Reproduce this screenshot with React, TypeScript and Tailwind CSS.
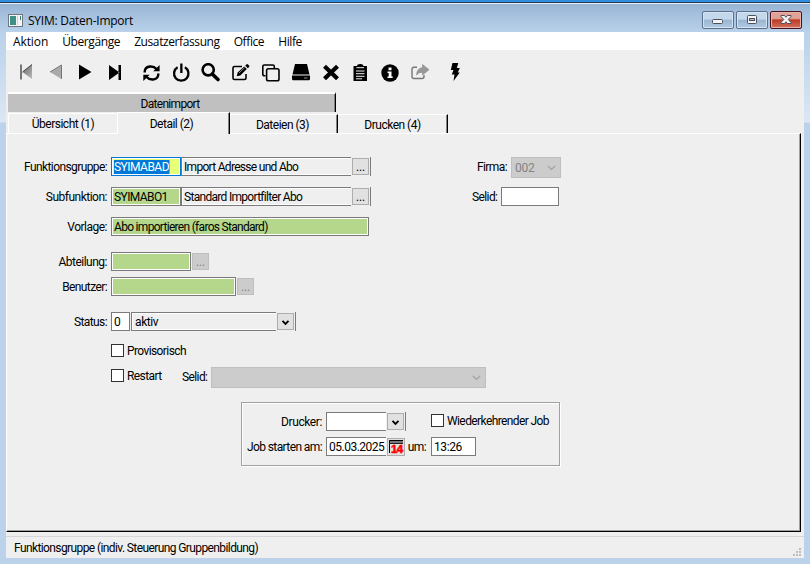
import type { ReactNode } from 'react';
import clsx from 'clsx';

const menuItems = ['Aktion', 'Übergänge', 'Zusatzerfassung', 'Office', 'Hilfe'];

const Icon = ({ children, className }: { children: ReactNode; className?: string }) => (
  <button className={clsx('flex h-5 w-[30px] shrink-0 items-center justify-center', className)}>
    <svg width="20" height="20" viewBox="0 0 20 20" fill="#000">
      {children}
    </svg>
  </button>
);

const Toolbar = () => (
  <div className="flex h-[42px] items-start pt-[13px] pl-[5px]">
    <Icon>
      <defs>
        <linearGradient id="fade" x1="0" y1="0" x2="1" y2="1">
          <stop offset="0" stopColor="#666" />
          <stop offset="1" stopColor="#bbb" />
        </linearGradient>
      </defs>
      <path d="M5 1.500v15" stroke="#777" strokeWidth="2" />
      <path d="M16 1.500v14.500L6.500 9z" fill="url(#fade)" />
      <path d="M16 1.500L6.500 9" stroke="#444" strokeWidth="1" />
    </Icon>
    <Icon>
      <path d="M15.500 2v14L4 9z" fill="#aaa" />
      <path d="M15.500 2v14M15.500 2L4 9" stroke="#777" fill="none" />
    </Icon>
    <Icon>
      <path d="M3 1.500v15L15.500 9z" />
    </Icon>
    <Icon>
      <path d="M3 2v15L13.500 9.500zM12.500 2H15v15h-2.500z" />
    </Icon>
    <Icon className="ml-1.5">
      <g fill="none" stroke="#000" strokeWidth="2.400">
        <path d="M2.700 9.500V8.500Q3 4 8 3.500q4-.3 6.500 2.500" />
        <path d="M16.300 10.500v1Q16 16 11 16.500q-4 .3-6.500-2.500" />
      </g>
      <path d="M17.600 2v6.200h-6.400zM1.300 18v-6.200h6.400z" />
    </Icon>
    <Icon>
      <path d="M5.600 4.300a7.200 7.200 0 1 0 7.300 0" fill="none" stroke="#000" strokeWidth="2.300" />
      <path d="M8.200.5h2.300V10H8.200z" />
    </Icon>
    <Icon className="-ml-px">
      <circle cx="7.200" cy="6.800" r="5.600" fill="none" stroke="#000" strokeWidth="2.600" />
      <path d="M11.500 11.200l5.500 5.300" stroke="#000" strokeWidth="3.600" strokeLinecap="round" />
    </Icon>
    <Icon>
      <path d="M11 3.500H3.500A1.500 1.500 0 0 0 2 5v10a1.500 1.500 0 0 0 1.500 1.500h10A1.500 1.500 0 0 0 15 15v-4" fill="none" stroke="#000" strokeWidth="1.600" />
      <path d="M5.800 13.300l.8-3.700 6.700-6.200 2.500 2.600-6.500 6.400zM14.200 2.600l1.200-1.200q.8-.6 1.600 0l1.100 1.100q.6.800 0 1.500l-1.300 1.200z" />
      <path d="M8 10l5.500-5.200" stroke="#efefef" strokeWidth=".6" />
    </Icon>
    <Icon>
      <g fill="none" stroke="#000" strokeWidth="1.600">
        <path d="M4.500 12.800H3.300a1.500 1.500 0 0 1-1.500-1.500V3.500A1.500 1.500 0 0 1 3.300 2h8.500a1.500 1.500 0 0 1 1.500 1.500V5" />
        <rect x="5.600" y="5.800" width="12.400" height="12" rx="1.800" />
      </g>
    </Icon>
    <Icon>
      <path d="M4 1h12l2.500 10.500h-17zM1 12.500h18V16q0 1.300-1.300 1.300H2.300Q1 17.300 1 16z" />
      <path d="M13 15h3.500" stroke="#888" />
    </Icon>
    <Icon>
      <path d="M3.500 3.300l13 12.400M16.500 3.300l-13 12.400" stroke="#000" strokeWidth="4.200" />
    </Icon>
    <Icon className="-ml-px">
      <path d="M4.500 3H7q0-2 3.200-2t3.200 2H17v15H3.500V3z" />
      <path d="M6.500 4.700h7.500M6 8h8.500M6 10.700h8.500M6 13.300h8.500M6 15.800h6" stroke="#efefef" strokeWidth="1" />
    </Icon>
    <Icon>
      <circle cx="10" cy="10" r="8.700" />
      <path d="M8.500 4.500h3v2.700h-3zM7.500 8.500h4v5h1.200v1.500H7.500v-1.500h1.200V10H7.500z" fill="#fff" />
    </Icon>
    <Icon>
      <path d="M7 4.200H4q-2 0-2 2v7.300q0 2 2 2h8q2 0 2-2V12" fill="none" stroke="#777" strokeWidth="1.400" />
      <path d="M12.500 1.500L19 6.700l-6.500 5.200V9.200Q8.500 9 6.500 12 7 5 12.500 4.700z" fill="#999" stroke="#777" strokeWidth=".5" />
    </Icon>
    <Icon className="ml-[5px]">
      <path d="M7.500 0h5.800l-1.500 5h3l-2 4.500h2L8.500 18l1-6.500H6.800L8.500 7H5.800z" />
    </Icon>
  </div>
);

const WindowButtons = () => (
  <div className="flex gap-0.5">
    <button className="flex h-[18px] w-8 items-center justify-center rounded-[2px] border border-[#5c6f8c] bg-gradient-to-b from-[#c4d8ec] from-45% via-[#9ab5d2] via-50% to-[#b2cbe4] shadow-[inset_0_0_0_1px_#d5e4f3]">
      <svg width="12" height="12">
        <rect x=".5" y="5.500" width="10" height="4" rx="1" fill="#f4f4f4" stroke="#4b4f5e" />
      </svg>
    </button>
    <button className="flex h-[18px] w-8 items-center justify-center rounded-[2px] border border-[#5c6f8c] bg-gradient-to-b from-[#c4d8ec] from-45% via-[#9ab5d2] via-50% to-[#b2cbe4] shadow-[inset_0_0_0_1px_#d5e4f3]">
      <svg width="12" height="12">
        <rect x="1.500" y="1.500" width="9" height="8" rx="1" fill="#f4f4f4" stroke="#4b4f5e" />
        <rect x="3.500" y="4.500" width="5" height="2" fill="#a9bdd4" stroke="#4b4f5e" />
      </svg>
    </button>
    <button className="flex h-[18px] w-8 items-center justify-center rounded-[2px] border border-[#43101c] bg-gradient-to-b from-[#e2a196] from-40% via-[#bd3a22] via-50% to-[#d0705c] shadow-[inset_0_0_0_1px_#e8b4aa]">
      <svg width="12" height="12" viewBox="0 0 12 12">
        <path d="M1 1.500h3.500L6 3.300l1.500-1.800H11v1L8.300 5.500 11 8.500v1H7.500L6 7.800 4.500 9.500H1v-1l2.700-3L1 2.500z" fill="#f4f4f4" stroke="#4b4f5e" />
      </svg>
    </button>
  </div>
);

const Label = ({ children, className }: { children: ReactNode; className?: string }) => (
  <label className={clsx('mr-[3px] pr-px text-right whitespace-nowrap', className ?? 'w-[102px]')}>{children}</label>
);

// sunken edit field
const Field = ({ children, className }: { children?: ReactNode; className?: string }) => (
  <div className={clsx('flex h-[19px] items-center border border-[#7b7b7b] whitespace-nowrap', className)}>{children}</div>
);

const green = 'bg-[#b4d78b] shadow-[inset_0_0_0_1px_#fff]';

const DotButton = ({ disabled }: { disabled?: boolean }) => (
  <button
    className={clsx(
      'ml-px flex h-[17px] w-[17px] items-center justify-center border tracking-[-0.2px]',
      disabled ? 'border-[#bfbfbf] bg-[#cccccc] text-[#838383]' : 'border-[#adadad] bg-[#e1e1e1]',
    )}
  >
    ...
  </button>
);

const DropButton = () => (
  <button className="ml-px flex h-[17px] w-[17px] items-center justify-center border border-[#adadad] bg-[#e1e1e1] pt-0.5">
    <svg width="9" height="7">
      <path d="M1.500 1.800l3 3 3-3" fill="none" stroke="#000" strokeWidth="1.900" />
    </svg>
  </button>
);

const EdgeLine = () => <span className="ml-px h-[19px] w-px bg-[#7b7b7b]" />;

const Checkbox = ({ label }: { label: string }) => (
  <label className="flex h-[13px] items-center gap-[3px] whitespace-nowrap">
    <span className="h-[13px] w-[13px] shrink-0 border border-[#333] bg-white" />
    {label}
  </label>
);

const DisabledCombo = ({ children, className }: { children?: ReactNode; className?: string }) => (
  <div className={clsx('flex h-[21px] items-center justify-between border border-[#bfbfbf] bg-[#cccccc] pr-1 pl-[3px] text-[#838383]', className)}>
    <span>{children}</span>
    <svg width="9" height="6">
      <path d="M.8.8l3.700 3.700L8.200.8" fill="none" stroke="#a0a0a0" strokeWidth="1.200" />
    </svg>
  </div>
);

const JobBox = () => (
  <div className="mt-[14px] ml-[235px] h-16 w-[319px] border border-[#a0a0a0] pt-[9px] shadow-[inset_1px_1px_0_#fff,1px_1px_0_#fff]">
    <div className="flex h-[19px] items-center">
      <Label className="w-[81px] tracking-[-0.4px]">Drucker:</Label>
      <Field className="w-[60px] border-r-0 bg-white" />
      <DropButton />
      <EdgeLine />
      <div className="ml-[25px] pb-0.5">
        <Checkbox label="Wiederkehrender Job" />
      </div>
    </div>
    <div className="mt-1.5 flex h-[19px] items-center">
      <Label className="w-[81px]">Job starten am:</Label>
      <Field className="w-[60px] border-r-0 bg-white pl-0.5 tracking-[-0.5px]">05.03.2025</Field>
      <button className="ml-px h-[18px] w-[18px] border border-[#adadad] bg-[#e1e1e1]">
        <svg width="16" height="16">
          <path d="M1 1h14v3H1z" fill="#777" />
          <path d="M1.500 14V1.500H15" fill="none" stroke="#000" />
          <path d="M1 4.500h14" stroke="#222" />
          <text x="3" y="13.500" fill="#f00" stroke="#f00" strokeWidth=".5" fontSize="10.500" fontWeight="700" fontFamily="Liberation Sans, sans-serif" textLength="11.500" lengthAdjust="spacingAndGlyphs">14</text>
        </svg>
      </button>
      <Label className="w-[22px]">um:</Label>
      <Field className="ml-px w-[45px] bg-white pl-0.5 tracking-[-0.4px]">13:26</Field>
    </div>
  </div>
);

const Form = () => (
  <div className="h-[399px] w-[795px] border border-t-white border-r-black border-b-black border-l-white pt-[23px] shadow-[inset_-1px_-1px_0_#a0a0a0]">
    <div className="-ml-px">
      <div className="flex h-[19px]">
        <div className="flex items-center">
          <Label>Funktionsgruppe:</Label>
          <div className="flex h-[19px] w-[70px] items-center border border-[#0078d7] bg-[#e8ff78] px-0.5 shadow-[inset_0_0_0_1px_#fff]">
            <span className="border-r border-[#ff8728] bg-[#0078d7] leading-[14px] tracking-[-0.52px] text-white">SYIMABAD</span>
          </div>
          <Field className="w-[170px] border-r-0 pl-0.5 tracking-[-0.7px] shadow-[inset_1px_1px_0_#fff,inset_0_-1px_0_#fff]">Import Adresse und Abo</Field>
          <DotButton />
          <EdgeLine />
        </div>
        <div className="ml-[106px] flex items-start">
          <Label className="w-[31px] pt-[3px]">Firma:</Label>
          <DisabledCombo className="w-[50px] tracking-[-0.3px]">002</DisabledCombo>
        </div>
      </div>
      <div className="mt-[11px] flex h-[19px] items-center">
        <Label className="w-[102px] tracking-[-0.5px]">Subfunktion:</Label>
        <Field className={clsx(green, 'w-[70px] pl-0.5')}>SYIMABO1</Field>
        <Field className="w-[170px] border-r-0 pl-0.5 tracking-[-0.7px] shadow-[inset_1px_1px_0_#fff,inset_0_-1px_0_#fff]">Standard Importfilter Abo</Field>
        <DotButton />
        <EdgeLine />
        <Label className="ml-[101px] w-[26px]">Selid:</Label>
        <Field className="w-[58px] bg-white" />
      </div>
      <div className="mt-[11px] flex h-[19px] items-center">
        <Label className="w-[102px] tracking-[-0.5px]">Vorlage:</Label>
        <Field className={clsx(green, 'w-[258px] pl-0.5 tracking-[-0.7px]')}>Abo importieren (faros Standard)</Field>
      </div>
      <div className="mt-4 flex h-[19px] items-center">
        <Label className="w-[102px] tracking-[-0.5px]">Abteilung:</Label>
        <Field className={clsx(green, 'w-20')} />
        <DotButton disabled />
      </div>
      <div className="mt-1.5 flex h-[19px] items-center">
        <Label>Benutzer:</Label>
        <Field className={clsx(green, 'w-[125px]')} />
        <DotButton disabled />
      </div>
      <div className="mt-4 flex h-[19px] items-center">
        <Label>Status:</Label>
        <Field className="w-[19px] bg-white pl-0.5">0</Field>
        <Field className="ml-px w-[145px] border-r-0 pl-[3px] tracking-[-0.4px] shadow-[inset_1px_1px_0_#fff,inset_0_-1px_0_#fff]">aktiv</Field>
        <DropButton />
        <EdgeLine />
      </div>
      <div className="mt-[13px] ml-[105px]">
        <Checkbox label="Provisorisch" />
      </div>
      <div className="mt-[10px] ml-[105px] flex h-[21px] items-start">
        <div className="mt-0.5 w-[71px]">
          <Checkbox label="Restart" />
        </div>
        <Label className="mt-[3px] w-[26px]">Selid:</Label>
        <DisabledCombo className="w-[275px]" />
      </div>
      <JobBox />
    </div>
  </div>
);

const tabEdge = 'border-t border-r border-t-white border-r-black shadow-[inset_-1px_0_0_#808080]';

const Tabs = () => (
  <div className="h-[41px] pl-0.5">
    <div className="flex h-5 w-[328px] items-center justify-center border-t-2 border-r border-t-white border-r-black bg-[#c0c0c0] pt-0.5 pr-[3px] tracking-[-0.7px] shadow-[inset_-1px_0_0_#808080]">Datenimport</div>
    <div className="flex h-[21px] items-end tracking-[-0.5px]">
      <div className="flex h-5 w-[109px] items-center justify-center rounded-t-[2px] border-t border-l border-white pt-px">Übersicht (1)</div>
      <div className={clsx('z-10 -mb-px flex h-[22px] w-[113px] items-center justify-center border-l border-l-white bg-[#efefef] pr-1', tabEdge)}>Detail (2)</div>
      <div className={clsx('flex h-[19px] w-[108px] items-center justify-center pt-px pr-0.5', tabEdge)}>Dateien (3)</div>
      <div className={clsx('flex h-[19px] w-[110px] items-center justify-center pt-px', tabEdge)}>Drucken (4)</div>
    </div>
  </div>
);

export default function App() {
  return (
    <div className="h-[564px] w-[810px] overflow-hidden border-t-2 border-t-[#2e8fe0] bg-[linear-gradient(180deg,#98b4d4_0px,#b9d1ea_30px,#dbe7f4_120px,#bcd2ea_121px)] text-[12px] leading-[14px] tracking-[-0.6px] text-black [font-family:Roboto,'Liberation_Sans',sans-serif]">
      <div className="flex h-[30px] items-center justify-between border-t border-t-[#27394d] bg-gradient-to-b from-[#98b4d4] to-[#b9d1ea] pt-[5px] pr-2 pl-2 shadow-[inset_0_1px_0_#e6eff8]">
        <div className="flex items-center gap-[5px]">
          <svg width="15" height="13">
            <rect x=".5" y=".5" width="14" height="12" fill="#f5f5f5" stroke="#6e7780" />
            <rect x="2" y="2" width="6" height="9" fill="#3f8f87" />
            <path d="M9.500 2v9" stroke="#cbd3dc" />
            <path d="M12.500 2v4" stroke="#397f78" />
          </svg>
          <span className="pt-0.5 text-[12px] tracking-[-0.25px] [font-family:'Open_Sans','Noto_Sans',sans-serif]">SYIM: Daten-Import</span>
        </div>
        <WindowButtons />
      </div>
      <div className="mx-1.5 h-[526px] w-[798px] bg-[#efefef]">
        <nav className="flex h-[18px] items-center gap-[14px] bg-white pt-px pl-[7px] text-[12px] tracking-[-0.4px] [font-family:'Open_Sans','Noto_Sans',sans-serif]">
          {menuItems.map((item) => (
            <span key={item} className="first:tracking-[-0.1px]">{item}</span>
          ))}
        </nav>
        <Toolbar />
        <Tabs />
        <Form />
        <footer className="mt-1 flex h-[22px] items-center border-t border-[#d7d7d7] pl-2">
          <span>Funktionsgruppe (indiv. Steuerung Gruppenbildung)</span>
          <svg className="mt-[9px] mr-[3px] ml-auto" width="8" height="8" fill="#bcbcbc">
            <path d="M6 0h2v2H6zM3 3h2v2H3zM6 3h2v2H6zM0 6h2v2H0zM3 6h2v2H3zM6 6h2v2H6z" />
          </svg>
        </footer>
      </div>
    </div>
  );
}
